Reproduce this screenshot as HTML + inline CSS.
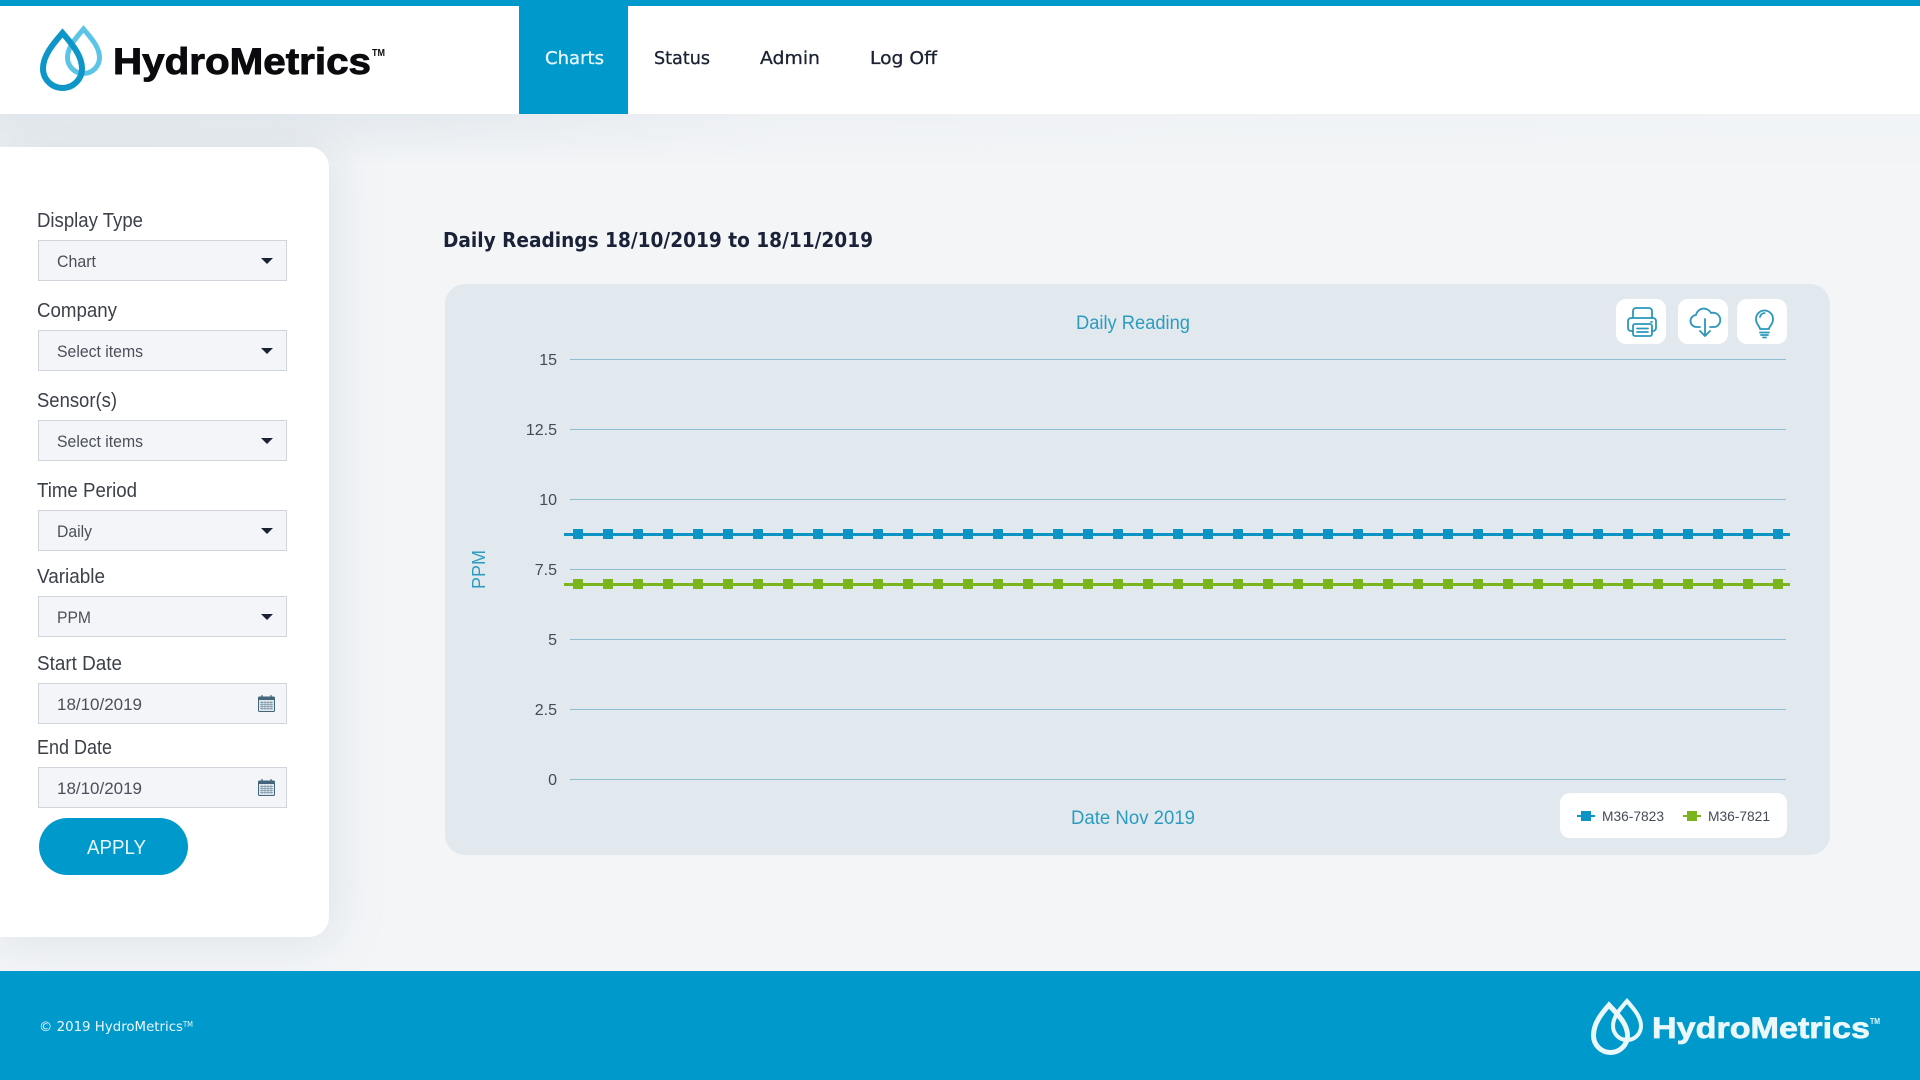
<!DOCTYPE html>
<html lang="en">
<head>
<meta charset="utf-8">
<title>HydroMetrics</title>
<style>
html,body{margin:0;padding:0;width:1920px;height:1080px;overflow:hidden;background:#f3f5f7;}
.abs{position:absolute;}
#shade{left:0;top:114px;width:1920px;height:50px;background:linear-gradient(90deg,#e2e8ed 0,#e4e9ee 420px,#eef1f4 800px,#f0f3f5 1920px);-webkit-mask-image:linear-gradient(#000,transparent);mask-image:linear-gradient(#000,transparent);}
#side{left:0;top:147px;width:329px;height:790px;background:#fff;border-radius:0 20px 20px 0;box-shadow:0 0 50px rgba(170,185,200,.36);}
#card{left:445px;top:284px;width:1385px;height:571px;background:#e2e9ee;border-radius:20px;}
#head{left:0;top:0;width:1920px;height:114px;background:#fff;}
#foot{left:0;top:971px;width:1920px;height:109px;background:#0099cc;}
svg{position:absolute;left:0;top:0;}
.r{font-family:"Liberation Sans",sans-serif;}
.d{font-family:"DejaVu Sans",sans-serif;}
</style>
</head>
<body>
<div id="shade" class="abs"></div>
<div id="side" class="abs"></div>
<div id="card" class="abs"></div>
<div id="head" class="abs"></div>
<div id="foot" class="abs"></div>
<svg width="1920" height="1080" viewBox="0 0 1920 1080">
<rect x="0" y="0" width="1920" height="6" fill="#0099cc"/>
<rect x="519" y="0" width="109" height="114" fill="#0099cc"/>

<!-- logo -->
<path d="M83.500 29C76 38 67.500 47 67.500 57.500A16 16 0 0 0 99.500 57.500C99.500 47 91 38 83.500 29Z" fill="none" stroke="#5cc4e6" stroke-width="5" stroke-miterlimit="10"/>
<path d="M62.500 33C54 43 43 55 43 68.500A19.500 19.500 0 0 0 82 68.500C82 55 71 43 62.500 33Z" fill="none" stroke="#0e96c8" stroke-width="6" stroke-miterlimit="10"/>
<text x="113" y="74" class="r" font-size="37" font-weight="700" fill="#0b0b0f" stroke="#0b0b0f" stroke-width=".9" textLength="258" lengthAdjust="spacingAndGlyphs">HydroMetrics</text>
<text x="372" y="56" class="r" font-size="10" font-weight="700" fill="#0b0b0f" textLength="13" lengthAdjust="spacingAndGlyphs">TM</text>

<!-- nav -->
<g class="d" font-size="17.5" stroke-width=".3">
<text x="545" y="64" fill="#e8f7fc" stroke="#e8f7fc" textLength="59" lengthAdjust="spacingAndGlyphs">Charts</text>
<text x="654" y="64" fill="#1b2233" stroke="#1b2233" textLength="56" lengthAdjust="spacingAndGlyphs">Status</text>
<text x="760" y="64" fill="#1b2233" stroke="#1b2233" textLength="60" lengthAdjust="spacingAndGlyphs">Admin</text>
<text x="870" y="64" fill="#1b2233" stroke="#1b2233" textLength="67" lengthAdjust="spacingAndGlyphs">Log Off</text>
</g>

<!-- form labels -->
<g class="r" font-size="20" fill="#3c4048">
<text x="37" y="227" textLength="106" lengthAdjust="spacingAndGlyphs">Display Type</text>
<text x="37" y="317" textLength="80" lengthAdjust="spacingAndGlyphs">Company</text>
<text x="37" y="407" textLength="80" lengthAdjust="spacingAndGlyphs">Sensor(s)</text>
<text x="37" y="497" textLength="100" lengthAdjust="spacingAndGlyphs">Time Period</text>
<text x="37" y="583" textLength="68" lengthAdjust="spacingAndGlyphs">Variable</text>
<text x="37" y="670" textLength="85" lengthAdjust="spacingAndGlyphs">Start Date</text>
<text x="37" y="754" textLength="75" lengthAdjust="spacingAndGlyphs">End Date</text>
</g>

<!-- inputs -->
<g fill="#f3f5f8" stroke="#d0d5dc" stroke-width="1">
<rect x="38.5" y="240.5" width="248" height="40"/>
<rect x="38.5" y="330.5" width="248" height="40"/>
<rect x="38.5" y="420.5" width="248" height="40"/>
<rect x="38.5" y="510.5" width="248" height="40"/>
<rect x="38.5" y="596.5" width="248" height="40"/>
<rect x="38.5" y="683.5" width="248" height="40"/>
<rect x="38.5" y="767.5" width="248" height="40"/>
</g>
<g class="r" font-size="17" fill="#4a4f59">
<text x="57" y="267" textLength="39" lengthAdjust="spacingAndGlyphs">Chart</text>
<text x="57" y="357" textLength="86" lengthAdjust="spacingAndGlyphs">Select items</text>
<text x="57" y="447" textLength="86" lengthAdjust="spacingAndGlyphs">Select items</text>
<text x="57" y="537" textLength="35" lengthAdjust="spacingAndGlyphs">Daily</text>
<text x="57" y="623" textLength="34" lengthAdjust="spacingAndGlyphs">PPM</text>
<text x="57" y="710" textLength="85" lengthAdjust="spacingAndGlyphs">18/10/2019</text>
<text x="57" y="794" textLength="85" lengthAdjust="spacingAndGlyphs">18/10/2019</text>
</g>
<g fill="#1b2233">
<path d="M261 258h12l-6 6z"/>
<path d="M261 348h12l-6 6z"/>
<path d="M261 438h12l-6 6z"/>
<path d="M261 528h12l-6 6z"/>
<path d="M261 614h12l-6 6z"/>
</g>
<!-- calendar icons -->
<g>
<rect x="258.500" y="697" width="16" height="14.500" rx="1" fill="#dfe6ec" stroke="#44657c" stroke-width="1"/>
<rect x="258.500" y="697" width="16" height="3" fill="#44657c"/>
<path d="M262 695v3M271 695v3" stroke="#44657c" stroke-width="1.200"/>
<path d="M260 702.500h13M260 704.500h13M260 706.500h13M260 708.500h13M262 701v9M265 701v9M268 701v9M271 701v9" stroke="#7d96a8" stroke-width=".7"/>
</g>
<g transform="translate(0,84)">
<rect x="258.500" y="697" width="16" height="14.500" rx="1" fill="#dfe6ec" stroke="#44657c" stroke-width="1"/>
<rect x="258.500" y="697" width="16" height="3" fill="#44657c"/>
<path d="M262 695v3M271 695v3" stroke="#44657c" stroke-width="1.200"/>
<path d="M260 702.500h13M260 704.500h13M260 706.500h13M260 708.500h13M262 701v9M265 701v9M268 701v9M271 701v9" stroke="#7d96a8" stroke-width=".7"/>
</g>
<!-- apply -->
<rect x="39" y="818" width="149" height="57" rx="28.500" fill="#0099cc"/>
<text x="87" y="854" class="r" font-size="20" fill="#e6f6fb" textLength="59" lengthAdjust="spacingAndGlyphs">APPLY</text>

<!-- heading -->
<text x="443" y="247" class="d" font-size="20" font-weight="700" fill="#1a2238" textLength="430" lengthAdjust="spacingAndGlyphs">Daily Readings 18/10/2019 to 18/11/2019</text>

<!-- chart titles -->
<g class="r" fill="#2b9cc0">
<text x="1076" y="329" font-size="19" textLength="114" lengthAdjust="spacingAndGlyphs">Daily Reading</text>
<text x="1071" y="824" font-size="19" textLength="124" lengthAdjust="spacingAndGlyphs">Date Nov 2019</text>
<text transform="translate(485,589) rotate(-90)" font-size="18" textLength="39" lengthAdjust="spacingAndGlyphs">PPM</text>
</g>

<!-- icon buttons -->
<rect x="1616" y="299" width="50" height="45" rx="10" fill="#fff"/>
<rect x="1678" y="299" width="50" height="45" rx="10" fill="#fff"/>
<rect x="1737" y="299" width="50" height="45" rx="10" fill="#fff"/>
<g fill="none" stroke="#2a97bd" stroke-width="1.800" stroke-linecap="round" stroke-linejoin="round">
<path d="M1633 318V311a3 3 0 0 1 3-3h13a3 3 0 0 1 3 3v7"/>
<path d="M1633 331h-2a3 3 0 0 1-3-3v-7a3 3 0 0 1 3-3h22a3 3 0 0 1 3 3v7a3 3 0 0 1-3 3h-1"/>
<rect x="1633" y="324" width="19" height="12" rx="2"/>
<path d="M1637 328.500h11M1637 332h11"/>
<path d="M1651 322h1"/>
<path d="M1700 327h-3a6 6 0 0 1-1-12 8 8 0 0 1 15-2 6.500 6.500 0 0 1 4 14h-5"/>
<path d="M1705 319v17M1700 331l5 5 5-5"/>
<path d="M1760 329c0-3-4-4-4-10a8.500 8.500 0 0 1 17 0c0 6-4 7-4 10z"/>
<path d="M1760 317a5 5 0 0 1 4.500-4"/>
<path d="M1760 332.500h9M1761 335h7M1763 337.500h3"/>
</g>

<!-- grid -->
<g stroke="#8fbdd0" stroke-width="1">
<path d="M570 359.500H1786M570 429.500H1786M570 499.500H1786M570 569.500H1786M570 639.500H1786M570 709.500H1786M570 779.500H1786"/>
</g>
<g class="r" font-size="16" fill="#454b55" text-anchor="end">
<text x="557" y="365">15</text>
<text x="557" y="435">12.5</text>
<text x="557" y="505">10</text>
<text x="557" y="575">7.5</text>
<text x="557" y="645">5</text>
<text x="557" y="715">2.5</text>
<text x="557" y="785">0</text>
</g>

<!-- series -->
<rect x="564" y="533" width="1226" height="3" fill="#0e94c4"/>
<rect x="564" y="583" width="1226" height="3" fill="#7ab51d"/>
<path fill="#0e94c4" d="M573 529h10v10h-10zM603 529h10v10h-10zM633 529h10v10h-10zM663 529h10v10h-10zM693 529h10v10h-10zM723 529h10v10h-10zM753 529h10v10h-10zM783 529h10v10h-10zM813 529h10v10h-10zM843 529h10v10h-10zM873 529h10v10h-10zM903 529h10v10h-10zM933 529h10v10h-10zM963 529h10v10h-10zM993 529h10v10h-10zM1023 529h10v10h-10zM1053 529h10v10h-10zM1083 529h10v10h-10zM1113 529h10v10h-10zM1143 529h10v10h-10zM1173 529h10v10h-10zM1203 529h10v10h-10zM1233 529h10v10h-10zM1263 529h10v10h-10zM1293 529h10v10h-10zM1323 529h10v10h-10zM1353 529h10v10h-10zM1383 529h10v10h-10zM1413 529h10v10h-10zM1443 529h10v10h-10zM1473 529h10v10h-10zM1503 529h10v10h-10zM1533 529h10v10h-10zM1563 529h10v10h-10zM1593 529h10v10h-10zM1623 529h10v10h-10zM1653 529h10v10h-10zM1683 529h10v10h-10zM1713 529h10v10h-10zM1743 529h10v10h-10zM1773 529h10v10h-10z"/>
<path fill="#7ab51d" d="M573 579h10v10h-10zM603 579h10v10h-10zM633 579h10v10h-10zM663 579h10v10h-10zM693 579h10v10h-10zM723 579h10v10h-10zM753 579h10v10h-10zM783 579h10v10h-10zM813 579h10v10h-10zM843 579h10v10h-10zM873 579h10v10h-10zM903 579h10v10h-10zM933 579h10v10h-10zM963 579h10v10h-10zM993 579h10v10h-10zM1023 579h10v10h-10zM1053 579h10v10h-10zM1083 579h10v10h-10zM1113 579h10v10h-10zM1143 579h10v10h-10zM1173 579h10v10h-10zM1203 579h10v10h-10zM1233 579h10v10h-10zM1263 579h10v10h-10zM1293 579h10v10h-10zM1323 579h10v10h-10zM1353 579h10v10h-10zM1383 579h10v10h-10zM1413 579h10v10h-10zM1443 579h10v10h-10zM1473 579h10v10h-10zM1503 579h10v10h-10zM1533 579h10v10h-10zM1563 579h10v10h-10zM1593 579h10v10h-10zM1623 579h10v10h-10zM1653 579h10v10h-10zM1683 579h10v10h-10zM1713 579h10v10h-10zM1743 579h10v10h-10zM1773 579h10v10h-10z"/>

<!-- legend -->
<rect x="1560" y="793" width="227" height="45" rx="10" fill="#fff"/>
<rect x="1577" y="815" width="18" height="2" fill="#0e94c4"/>
<rect x="1581" y="811" width="10" height="10" fill="#0e94c4"/>
<rect x="1683" y="815" width="18" height="2" fill="#7ab51d"/>
<rect x="1687" y="811" width="10" height="10" fill="#7ab51d"/>
<g class="r" font-size="14" fill="#454b55">
<text x="1602" y="821" textLength="62" lengthAdjust="spacingAndGlyphs">M36-7823</text>
<text x="1708" y="821" textLength="62" lengthAdjust="spacingAndGlyphs">M36-7821</text>
</g>

<!-- footer -->
<text x="39" y="1031" class="d" font-size="13.500" fill="#eaf8fc" textLength="144" lengthAdjust="spacingAndGlyphs">© 2019 HydroMetrics</text>
<text x="183" y="1027" class="d" font-size="8" fill="#eaf8fc" textLength="10" lengthAdjust="spacingAndGlyphs">TM</text>
<path d="M1627 1001C1620 1009 1613 1017 1613 1026A14 14 0 0 0 1641 1026C1641 1017 1634 1009 1627 1001Z" fill="none" stroke="#eaf8fc" stroke-width="4" stroke-miterlimit="10"/>
<path d="M1609 1005C1602 1013 1593.500 1023 1593.500 1035.500A17 17 0 0 0 1627.500 1035.500C1627.500 1023 1616 1013 1609 1005Z" fill="none" stroke="#eaf8fc" stroke-width="5" stroke-miterlimit="10"/>
<text x="1652" y="1038" class="r" font-size="30" font-weight="700" fill="#eaf8fc" stroke="#eaf8fc" stroke-width=".7" textLength="218" lengthAdjust="spacingAndGlyphs">HydroMetrics</text>
<text x="1870" y="1024" class="r" font-size="8" font-weight="700" fill="#eaf8fc" textLength="10" lengthAdjust="spacingAndGlyphs">TM</text>
</svg>
</body>
</html>
